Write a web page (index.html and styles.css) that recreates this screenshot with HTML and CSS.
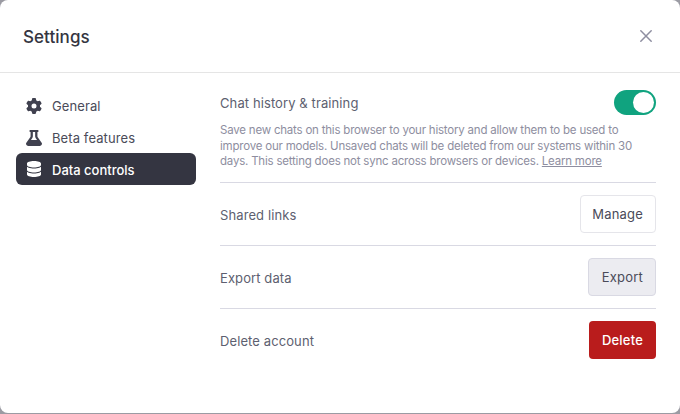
FILE: index.html
```html
<!DOCTYPE html>
<html lang="en">
<head>
<meta charset="utf-8">
<title>Settings</title>
<link rel="stylesheet" href="styles.css">
</head>
<body>
<div class="modal">
  <header class="modal-head">
    <h2 class="title">Settings</h2>
    <button class="close" aria-label="Close">
      <svg width="20" height="20" viewBox="0 0 20 20" fill="none" stroke="currentColor" stroke-width="1.5" stroke-linecap="round"><path d="M4.800 4.800l10.400 10.400M15.200 4.800L4.800 15.200"/></svg>
    </button>
  </header>
  <div class="modal-body">
    <nav class="side">
      <a class="tab">
        <svg class="tab-icon" viewBox="0 0 512 512" fill="currentColor"><path d="M495.900 166.600c3.200 8.700.5 18.400-6.400 24.600l-43.300 39.400c1.100 8.300 1.700 16.800 1.700 25.400s-.6 17.100-1.700 25.400l43.300 39.400c6.900 6.200 9.600 15.900 6.400 24.600-4.400 11.900-9.700 23.300-15.800 34.300l-4.700 8.100c-6.600 11-14 21.400-22.100 31.200-5.900 7.200-15.700 9.600-24.500 6.800l-55.700-17.700c-13.400 10.300-28.200 18.900-44 25.400l-12.500 57.100c-2 9.100-9 16.300-18.200 17.800-13.800 2.300-28 3.500-42.500 3.500s-28.700-1.200-42.500-3.500c-9.200-1.500-16.200-8.700-18.200-17.800l-12.500-57.100c-15.800-6.500-30.600-15.100-44-25.400l-55.600 17.800c-8.800 2.800-18.600.3-24.500-6.800-8.100-9.800-15.500-20.200-22.100-31.200l-4.700-8.100c-6.100-11-11.400-22.400-15.800-34.300-3.200-8.700-.5-18.400 6.400-24.600l43.300-39.400c-1.100-8.400-1.700-16.900-1.700-25.500s.6-17.100 1.700-25.400l-43.300-39.400c-6.900-6.200-9.600-15.900-6.400-24.600 4.400-11.900 9.700-23.300 15.800-34.300l4.700-8.100c6.600-11 14-21.400 22.100-31.200 5.900-7.200 15.700-9.600 24.500-6.800l55.700 17.700c13.400-10.300 28.200-18.900 44-25.400l12.500-57.100c2-9.100 9-16.300 18.200-17.800C227.300 1.200 241.500 0 256 0s28.700 1.200 42.500 3.500c9.200 1.500 16.200 8.700 18.200 17.800l12.500 57.100c15.800 6.500 30.600 15.100 44 25.400l55.700-17.700c8.800-2.800 18.600-.3 24.500 6.800 8.100 9.800 15.500 20.200 22.100 31.200l4.700 8.100c6.100 11 11.400 22.400 15.800 34.300zM256 336a80 80 0 1 0 0-160 80 80 0 1 0 0 160z"/></svg>
        <span>General</span>
      </a>
      <a class="tab">
        <svg class="tab-icon" viewBox="0 0 448 512" preserveAspectRatio="none" fill="currentColor"><path d="M288 0H160 128c-17.700 0-32 14.300-32 32s14.300 32 32 32V196.800c0 11.800-3.300 23.500-9.500 33.500L10.300 406.200C3.600 417.200 0 429.700 0 442.600 0 480.900 31.100 512 69.400 512H378.600c38.300 0 69.400-31.100 69.400-69.400 0-12.800-3.600-25.400-10.300-36.400L329.500 230.400c-6.200-10.100-9.500-21.700-9.500-33.500V64c17.700 0 32-14.300 32-32s-14.300-32-32-32H288zM192 196.800V64h64V196.800c0 23.700 6.600 46.900 19 67.100L309.500 320H138.500l34.500-56.100c12.400-20.200 19-43.400 19-67.100z"/></svg>
        <span>Beta features</span>
      </a>
      <a class="tab tab-active">
        <svg class="tab-icon" viewBox="0 0 448 512" fill="currentColor"><path d="M448 80v48c0 44.200-100.300 80-224 80S0 172.200 0 128V80C0 35.800 100.300 0 224 0S448 35.800 448 80zM393.200 214.700c20.800-7.400 39.900-16.900 54.800-28.600V288c0 44.200-100.300 80-224 80S0 332.200 0 288V186.100c14.900 11.800 34 21.200 54.800 28.600C99.700 230.700 159.500 240 224 240s124.300-9.300 169.200-25.300zM0 346.100c14.900 11.800 34 21.200 54.800 28.600C99.700 390.700 159.500 400 224 400s124.300-9.300 169.200-25.300c20.800-7.400 39.900-16.900 54.800-28.600V432c0 44.200-100.300 80-224 80S0 476.200 0 432V346.100z"/></svg>
        <span class="tab-text">Data controls</span>
      </a>
    </nav>
    <section class="panel">
      <div class="block">
        <div class="row-top">
          <span>Chat history &amp; training</span>
          <span class="toggle"><span class="knob"></span></span>
        </div>
        <p class="desc">Save new chats on this browser to your history and allow them to be used to improve our models. Unsaved chats will be deleted from our systems within 30 days. This setting does not sync across browsers or devices. <a class="more">Learn more</a></p>
      </div>
      <div class="row">
        <span class="label">Shared links</span>
        <button class="btn btn-plain">Manage</button>
      </div>
      <div class="row">
        <span class="label">Export data</span>
        <button class="btn btn-grey">Export</button>
      </div>
      <div class="row row-last">
        <span class="label">Delete account</span>
        <button class="btn btn-red">Delete</button>
      </div>
    </section>
  </div>
</div>
</body>
</html>
```
FILE: styles.css
```css
* { box-sizing: border-box; }
html, body { margin: 0; height: 100%; }
body {
  background: #9b9ba3;
  font-family: Inter, "Liberation Sans", sans-serif;
  overflow: hidden;
}
.modal {
  width: 680px;
  height: 413px;
  background: #fff;
  border-radius: 8px;
  overflow: hidden;
}
.modal-head {
  height: 73px;
  padding: 0 24px 0 23px;
  border-bottom: 1px solid #e5e5e5;
  display: flex;
  align-items: center;
  justify-content: space-between;
}
.title {
  margin: 0;
  padding-top: 2px;
  font-size: 17px;
  font-weight: 500;
  letter-spacing: 0.05px;
  line-height: 1;
  color: #343541;
}
.close {
  border: 0;
  padding: 0;
  background: none;
  color: #8e8ea0;
  display: flex;
}
.modal-body {
  display: flex;
  padding: 17px 24px 0 16px;
  gap: 24px;
}
.side {
  width: 180px;
  display: flex;
  flex-direction: column;
}
.tab {
  height: 32px;
  padding: 0 10px;
  border-radius: 6px;
  display: flex;
  align-items: center;
  gap: 10px;
  font-size: 13px;
  letter-spacing: 0.1px;
  color: #4a4b59;
}
.tab-text { padding-top: 2px; }
.tab-icon { width: 16px; height: 16px; flex: none; margin-top: -1px; color: #40414f; }
.tab-active {
  background: #343541;
  color: #fff;
  font-weight: 500;
  letter-spacing: 0;
  margin-top: -1px;
}
.tab-active .tab-icon { color: #fff; }
.panel {
  flex: 1;
  min-width: 0;
  font-size: 13px;
  letter-spacing: 0.1px;
  color: #5d5f70;
}
.label { padding-top: 2px; }
.block {
  border-bottom: 1px solid #d9d9e3;
  height: 93px;
}
.row-top {
  display: flex;
  align-items: center;
  justify-content: space-between;
  height: 25px;
}
.toggle {
  width: 42px;
  height: 25px;
  border-radius: 13px;
  background: #10a37f;
  padding: 2px;
  display: flex;
  justify-content: flex-end;
}
.knob {
  width: 21px;
  height: 21px;
  border-radius: 50%;
  background: #fff;
}
.desc {
  margin: 8px 0 0;
  font-size: 11.5px;
  letter-spacing: -0.21px;
  line-height: 15.7px;
  color: #8e8ea0;
}
.more { text-decoration: underline; color: #8e8ea0; }
.row {
  height: 63px;
  border-bottom: 1px solid #d9d9e3;
  display: flex;
  align-items: center;
  justify-content: space-between;
}
.row-last { border-bottom-color: transparent; }
.btn {
  height: 38px;
  padding: 0 12px;
  border-radius: 4px;
  font: inherit;
  font-size: 13px;
  letter-spacing: 0.2px;
  border: 1px solid transparent;
}
.btn-plain { background: #fff; border-color: #e5e5ea; color: #4a4b59; padding-left: 11px; }
.btn-grey { background: #ececf1; border-color: #d9d9e3; color: #4a4b59; padding-left: 13px; }
.btn-red { background: #b91c1c; color: #fff; font-weight: 500; }
```
